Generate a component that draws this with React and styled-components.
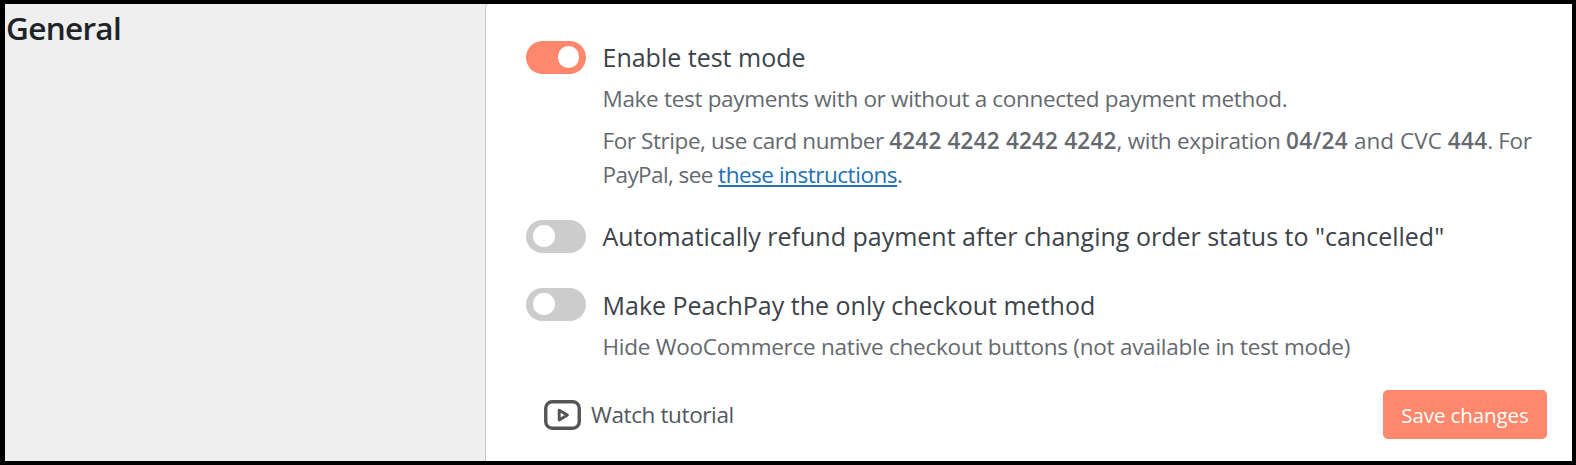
import React from 'react';
import styled, { createGlobalStyle } from 'styled-components';

const GlobalStyle = createGlobalStyle`
  *, *::before, *::after { box-sizing: border-box; }
  body {
    margin: 0;
    background: #000;
    font-family: "Open Sans", "Noto Sans", sans-serif;
  }
`;

const Frame = styled.div`
  width: 1576px;
  height: 465px;
  border: 4px solid #000;
  border-left-width: 5px;
  background: #efefef;
  display: flex;
  overflow: hidden;
`;

const Sidebar = styled.aside`
  flex: 0 0 480px;
  padding: 2px 0 0 1px;
`;

const Heading = styled.h2`
  margin: 0;
  font-size: 31.5px;
  line-height: 44px;
  font-weight: 600;
  letter-spacing: -0.68px;
  color: #1d2327;
`;

const Panel = styled.main`
  flex: 1;
  margin-top: -2px;
  padding: 37px 25px 0 40px;
  background: #fff;
  border-left: 1px solid #c8c8c8;
  border-top: 1px solid #c8c8c8;
  border-top-left-radius: 6px;
  display: flex;
  flex-direction: column;
`;

const Setting = styled.section`
  display: flex;
  align-items: flex-start;
  gap: 16.5px;
  margin-top: ${(p) => p.$gap || 0}px;
`;

const Switch = styled.button`
  flex: 0 0 60px;
  height: 33px;
  margin: ${(p) => p.$drop || 0}px 0 0;
  padding: ${(p) => (p.$on ? '5px 7px' : '5px 7px')};
  border: 0;
  border-radius: 17px;
  background: ${(p) => (p.$on ? '#ff876c' : '#cccccc')};
  display: flex;
  justify-content: ${(p) => (p.$on ? 'flex-end' : 'flex-start')};
`;

const Knob = styled.span`
  width: 21.5px;
  height: 21.5px;
  border-radius: 50%;
  background: #fff;
`;

const Body = styled.div`
  flex: 1;
  color: #646970;
`;

const Title = styled.div`
  font-size: 25px;
  line-height: 34px;
  color: #3c434a;
  white-space: nowrap;
`;

const Description = styled.p`
  margin: 8px 0 0;
  font-size: 22.5px;
  line-height: 34px;
  letter-spacing: ${(p) => p.$track || 0}px;
  white-space: nowrap;
`;

const Run = styled.span`
  letter-spacing: ${(p) => p.$track}px;
`;

const Strong = styled.strong`
  font-weight: 600;
  letter-spacing: ${(p) => p.$track}px;
`;

const Link = styled.a`
  color: #2271b1;
  letter-spacing: -0.47px;
  text-decoration: underline;
  text-decoration-thickness: 2px;
  text-underline-offset: 2px;
  text-decoration-skip-ink: none;
`;

const Footer = styled.footer`
  display: flex;
  align-items: center;
  justify-content: space-between;
  margin-top: 26px;
  padding-left: 18px;
`;

const Tutorial = styled.a`
  display: flex;
  align-items: center;
  gap: 10px;
  font-size: 22.5px;
  line-height: 34px;
  letter-spacing: -0.38px;
  color: #50575e;
`;

const SaveButton = styled.button`
  width: 164px;
  height: 49px;
  padding: 0;
  border: 0;
  border-radius: 5px;
  background: #ff876c;
  color: #fff;
  font-family: inherit;
  font-size: 20.5px;
  letter-spacing: -0.1px;
`;

const PlayIcon = () => (
  <svg width="37" height="30" viewBox="0 0 37 30" fill="none" stroke="#555" strokeLinejoin="round">
    <rect x="1.75" y="1.75" width="33.5" height="26.5" rx="6.5" strokeWidth="3.4" />
    <path d="M15.2 10.2V20L23.4 15.1Z" strokeWidth="2.9" />
  </svg>
);

const Toggle = ({ on, drop }) => (
  <Switch $on={on} $drop={drop} role="switch" aria-checked={!!on}>
    <Knob />
  </Switch>
);

export default function App() {
  return (
    <>
      <GlobalStyle />
      <Frame>
        <Sidebar>
          <Heading>General</Heading>
        </Sidebar>
        <Panel>
          <Setting>
            <Toggle on drop={1} />
            <Body>
              <Title>Enable test mode</Title>
              <Description $track={-0.315}>
                Make test payments with or without a connected payment method.
              </Description>
              <Description>
                <Run $track={-0.42}>For Stripe, use card number </Run>
                <Strong $track={0.21}>4242 4242 4242 4242</Strong>
                <Run $track={-0.3}>, with expiration </Run>
                <Strong $track={0.35}>04/24</Strong>
                <Run $track={0.05}> and CVC </Run>
                <Strong $track={0.3}>444</Strong>
                <Run $track={-0.4}>. For</Run>
                <br />
                <Run $track={-0.58}>PayPal, see </Run>
                <Link>these instructions</Link>.
              </Description>
            </Body>
          </Setting>
          <Setting $gap={27}>
            <Toggle drop={1} />
            <Body>
              <Title>Automatically refund payment after changing order status to "cancelled"</Title>
            </Body>
          </Setting>
          <Setting $gap={35}>
            <Toggle />
            <Body>
              <Title>Make PeachPay the only checkout method</Title>
              <Description $track={-0.25}>
                Hide WooCommerce native checkout buttons (not available in test mode)
              </Description>
            </Body>
          </Setting>
          <Footer>
            <Tutorial>
              <PlayIcon />
              Watch tutorial
            </Tutorial>
            <SaveButton>Save changes</SaveButton>
          </Footer>
        </Panel>
      </Frame>
    </>
  );
}
